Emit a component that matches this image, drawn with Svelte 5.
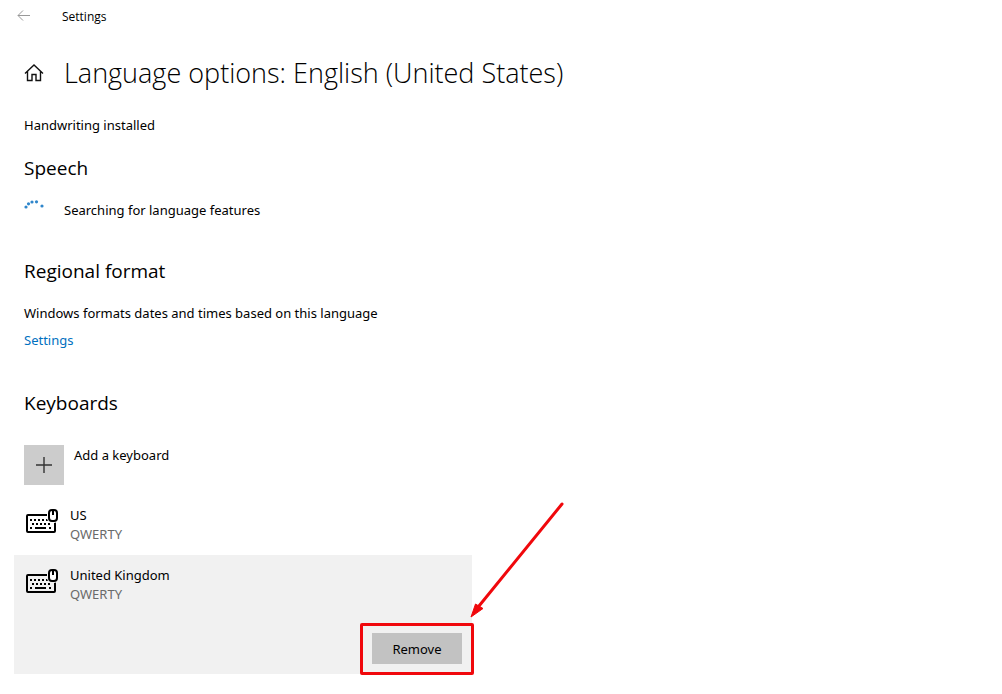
<script>
  const keyboards = [
    { name: 'US', layout: 'QWERTY', selected: false },
    { name: 'United Kingdom', layout: 'QWERTY', selected: true }
  ];
</script>

{#snippet keyboardIcon()}
  <svg width="34" height="34" viewBox="-1 -3 34 34" aria-hidden="true">
    <rect x="2" y="7" width="28" height="17" rx="1" fill="none" stroke="#000" stroke-width="2" />
    <g fill="#000">
      <path d="M5 11h2v2H5zM9 11h2v2H9zM13 11h2v2h-2zM17 11h2v2h-2zM21 11h2v2h-2z" />
      <path d="M7 15h2v2H7zM11 15h2v2h-2zM15 15h2v2h-2zM19 15h2v2h-2zM23 15h2v2h-2z" />
      <path d="M5 19h2v2H5zM10 19h11v2H10zM24 19h2v2h-2z" />
    </g>
    <rect class="mouse-gap" x="22" y="0" width="12" height="15" rx="5" />
    <rect x="24" y="2" width="8" height="11" rx="3" fill="#fff" stroke="#000" stroke-width="2" />
    <path d="M28 2v5" stroke="#000" stroke-width="2" />
  </svg>
{/snippet}

<header>
  <button class="back" aria-label="Back">
    <svg width="14" height="14" viewBox="0 0 14 14" fill="none" stroke="#999" aria-hidden="true">
      <path d="M13 5.5H1M6 .5l-5 5 5 5" />
    </svg>
  </button>
  <span>Settings</span>
</header>

<main>
  <div class="title">
    <button class="home" aria-label="Home">
      <svg width="20" height="20" viewBox="0 0 20 20" fill="none" stroke="#111" stroke-width="1.4" aria-hidden="true">
        <path d="M1 10.5L10 2l9 8.5M3.5 8.5v9H8v-6h4v6h4.500v-9" />
      </svg>
    </button>
    <h1>Language options: English (United States)</h1>
  </div>

  <p class="handwriting">Handwriting installed</p>

  <section class="speech">
    <h2>Speech</h2>
    <div class="searching">
      <svg width="20" height="20" viewBox="0 0 20 20" fill="#2f86cb" aria-hidden="true">
        <circle cx="2" cy="7" r="1.6" />
        <circle cx="4.5" cy="3.8" r="1.6" />
        <circle cx="8" cy="2" r="1.6" />
        <circle cx="12.5" cy="1.8" r="1.6" />
        <circle cx="18" cy="6" r="1.6" />
      </svg>
      <p>Searching for language features</p>
    </div>
  </section>

  <section class="regional">
    <h2>Regional format</h2>
    <p>Windows formats dates and times based on this language</p>
    <a href="#settings">Settings</a>
  </section>

  <section class="keyboards">
    <h2>Keyboards</h2>
    <button class="add">
      <span class="tile">
        <svg width="16" height="16" viewBox="0 0 16 16" stroke="#333" stroke-width="1.4" aria-hidden="true">
          <path d="M8 0v16M0 8h16" />
        </svg>
      </span>
      <span>Add a keyboard</span>
    </button>
    <ul>
      {#each keyboards as keyboard}
        <li class:selected={keyboard.selected}>
          <div class="entry">
            {@render keyboardIcon()}
            <div>
              <p>{keyboard.name}</p>
              <p class="layout">{keyboard.layout}</p>
            </div>
          </div>
          {#if keyboard.selected}
            <div class="actions">
              <button class="remove">Remove</button>
              <div class="frame"></div>
              <svg class="arrow" width="96" height="120" viewBox="0 0 96 120" aria-hidden="true">
                <path d="M92 6L9 108" stroke="#f0080c" stroke-width="3" stroke-linecap="round" />
                <path d="M1 119L5.5 106L13 110.5z" fill="#f0080c" stroke="#f0080c" stroke-width="1" />
              </svg>
            </div>
          {/if}
        </li>
      {/each}
    </ul>
  </section>
</main>

<style>
  :global(body) {
    background: #fff;
    color: #000;
    font-family: "Segoe UI", "Noto Sans", "Open Sans", sans-serif;
    font-size: 13px;
    line-height: 20px;
  }
  h1, h2, p, ul { margin: 0; padding: 0; font-weight: 400; }
  button {
    margin: 0;
    padding: 0;
    border: 0;
    background: none;
    color: inherit;
    font: inherit;
  }
  svg { display: block; flex: none; }
  header {
    display: flex;
    align-items: center;
    gap: 31px;
    height: 33px;
    padding: 0 17px;
    font: 12px/20px "Segoe UI", "Open Sans", sans-serif;
  }
  main { padding: 20px 24px; }
  .title { display: flex; align-items: center; gap: 20px; }
  h1 { font: 340 27px/40px "Segoe UI", "Open Sans", sans-serif; }
  h2 { font: 19px/28px "Segoe UI", "Open Sans", sans-serif; margin-bottom: 18px; }
  .handwriting { margin-top: 22px; }
  .speech { margin-top: 19px; }
  .searching { display: flex; gap: 20px; }
  .regional { margin-top: 37px; }
  a { display: inline-block; margin-top: 7px; color: #0070c0; text-decoration: none; }
  .keyboards { margin-top: 39px; }
  .keyboards h2 { margin-bottom: 28px; }
  .add { display: flex; gap: 10px; }
  .tile {
    display: grid;
    place-items: center;
    width: 40px;
    height: 40px;
    background: #ccc;
  }
  ul { margin: 10px -10px 0; max-width: 458px; list-style: none; }
  li { --row: #fff; padding: 10px 10px 11px; background: var(--row); }
  .selected { --row: #f1f1f1; padding-bottom: 10px; }
  .entry { display: flex; gap: 12px; }
  .entry p { line-height: 20px; }
  .entry .layout { line-height: 19px; color: #6a6a6a; }
  .mouse-gap { fill: var(--row); }
  .actions { position: relative; width: 90px; margin: 29px 0 0 auto; }
  .remove { display: block; width: 100%; height: 31px; background: #c2c2c2; }
  .frame {
    position: absolute;
    inset: -10px -12px -11px;
    border: 3px solid #f0080c;
    border-radius: 2px;
    pointer-events: none;
  }
  .arrow { position: absolute; left: 98px; bottom: 46px; pointer-events: none; }
</style>
